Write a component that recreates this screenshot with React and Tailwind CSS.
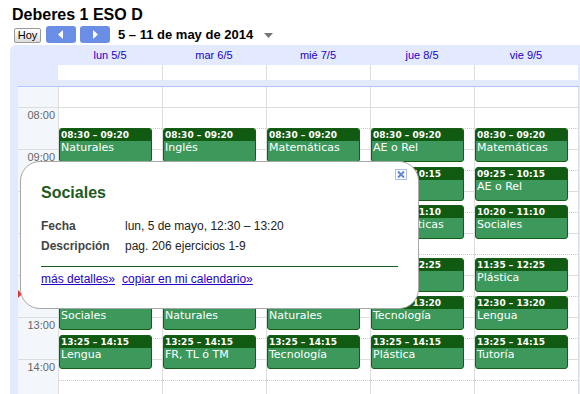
import React from 'react';

const starts = ['08:30', '09:25', '10:20', '11:35', '12:30', '13:25'];
const ends = ['09:20', '10:15', '11:10', '12:25', '13:20', '14:15'];

const days = [
  { label: 'lun 5/5', subjects: ['Naturales', 'Matemáticas', 'Lengua', 'Inglés', 'Sociales', 'Lengua'] },
  { label: 'mar 6/5', subjects: ['Inglés', 'Lengua', 'Matemáticas', 'Sociales', 'Naturales', 'FR, TL ó TM'] },
  { label: 'mié 7/5', subjects: ['Matemáticas', 'Inglés', 'Sociales', 'Lengua', 'Naturales', 'Tecnología'] },
  { label: 'jue 8/5', subjects: ['AE o Rel', 'Sociales', 'Matemáticas', 'Lengua', 'Tecnología', 'Plástica'] },
  { label: 'vie 9/5', subjects: ['Matemáticas', 'AE o Rel', 'Sociales', 'Plástica', 'Lengua', 'Tutoría'] },
];

const hours = ['08:00', '09:00', '10:00', '11:00', '12:00', '13:00', '14:00', ''];

function minutesFrom8(t) {
  const [h, m] = t.split(':').map(Number);
  return (h - 8) * 60 + m;
}

function Event({ start, end, title }) {
  const top = Math.floor(20.6 + 0.7 * minutesFrom8(start));
  return (
    <div
      className="absolute left-0 w-[93px] h-[34px] rounded-[3px] border border-[#175c17] bg-[#3c985b] overflow-hidden"
      style={{ top }}
    >
      <div className="h-[12px] bg-[#115a11] pl-[1px] text-[9px] leading-[12px] font-bold text-white font-['DejaVu_Sans',sans-serif] whitespace-nowrap">
        {start} – {end}
      </div>
      <div className="pl-[1px] text-[11px] leading-[14px] text-white font-['DejaVu_Sans',sans-serif] whitespace-nowrap">
        {title}
      </div>
    </div>
  );
}

function Slots() {
  return (
    <>
      <div className="h-[20px]" />
      {hours.map((h, i) => (
        <React.Fragment key={i}>
          <div className="h-[21px] border-t border-[#dddddd]" />
          <div className="h-[21px] border-t border-dotted border-[#cccccc]" />
        </React.Fragment>
      ))}
    </>
  );
}

export default function App() {
  return (
    <div className="relative w-[580px] h-[394px] overflow-hidden bg-white font-['Liberation_Sans',Arial,sans-serif] text-black">
      {/* Title */}
      <div className="h-[26px] pt-[5px] pl-[12px] text-[16px] leading-[20px] font-bold">
        Deberes 1 ESO D
      </div>

      {/* Toolbar */}
      <div className="flex items-start h-[19px]">
        <button className="ml-[14px] mt-[2px] w-[27px] h-[15px] border border-[#999] rounded-[2px] bg-gradient-to-b from-white to-[#dddddd] text-[11px] leading-[13px] text-black">
          Hoy
        </button>
        <div className="ml-[5px] w-[30px] h-[17px] rounded-[3px] bg-[#6a8ee6] flex items-center justify-center">
          <svg width="6" height="9" viewBox="0 0 6 9">
            <path d="M5 0 L0 4.5 L5 9 Z" fill="white" />
          </svg>
        </div>
        <div className="ml-[4px] w-[30px] h-[17px] rounded-[3px] bg-[#6a8ee6] flex items-center justify-center">
          <svg width="6" height="9" viewBox="0 0 6 9">
            <path d="M1 0 L6 4.5 L1 9 Z" fill="white" />
          </svg>
        </div>
        <div className="ml-[8px] text-[13px] leading-[17px] font-bold whitespace-nowrap">
          5 – 11 de may de 2014
        </div>
        <svg className="ml-[11px] mt-[7px]" width="9" height="5" viewBox="0 0 9 5">
          <path d="M0 0 L9 0 L4.5 5 Z" fill="#777" />
        </svg>
      </div>

      {/* Calendar */}
      <div className="ml-[10px] w-[570px] bg-[#e3e9ff] rounded-tl-[6px] pl-[8px]">
        {/* Day headers */}
        <div className="flex h-[20px]">
          <div className="w-[40px]" />
          {days.map((d) => (
            <div key={d.label} className="w-[104px] text-center text-[11px] leading-[20px] text-[#2200cc]">
              {d.label}
            </div>
          ))}
        </div>

        {/* All day row */}
        <div className="flex h-[15px]">
          <div className="w-[40px]" />
          {days.map((d, i) => (
            <div
              key={d.label}
              className={i === 0 ? 'w-[104px] bg-white' : 'w-[104px] bg-white border-l border-[#dddddd]'}
            />
          ))}
        </div>
        <div className="h-[6px]" />

        {/* Grid */}
        <div className="flex w-[561px] h-[320px] border-t border-[#b3c6ff]">
          <div className="w-[40px] bg-[#f3f6fb]">
            <div className="h-[20px]" />
            {hours.map((h, i) => (
              <div
                key={i}
                className="h-[42px] border-t border-[#dddddd] pr-[3px] pt-[1px] text-right text-[11px] leading-[13px] text-[#666]"
              >
                {h}
              </div>
            ))}
          </div>
          {days.map((d, i) => (
            <div
              key={d.label}
              className={
                i === 4
                  ? 'relative w-[105px] bg-white border-l border-r border-[#dddddd]'
                  : 'relative w-[104px] bg-white border-l border-[#dddddd]'
              }
            >
              <Slots />
              {d.subjects.map((s, k) => (
                <Event key={k} start={starts[k]} end={ends[k]} title={s} />
              ))}
            </div>
          ))}
        </div>
      </div>

      {/* Current time marker */}
      <svg className="absolute left-[18px] top-[290px]" width="4" height="8" viewBox="0 0 4 8">
        <path d="M0 0 L4 4 L0 8 Z" fill="#dd3333" />
      </svg>

      {/* Event popup */}
      <div className="absolute left-[20px] top-[161px] w-[399px] h-[148px] rounded-[20px] border border-[#a8a8a8] bg-white pt-[21px] px-[20px]">
        <div className="text-[16px] leading-[20px] font-bold text-[#1d5a1d]">Sociales</div>
        <div className="mt-[13px] flex text-[12px] leading-[20px] text-[#222]">
          <div className="w-[84px] font-bold text-[#444]">Fecha</div>
          <div>lun, 5 de mayo, 12:30 – 13:20</div>
        </div>
        <div className="flex text-[12px] leading-[20px] text-[#222]">
          <div className="w-[84px] font-bold text-[#444]">Descripción</div>
          <div>pag. 206 ejercicios 1-9</div>
        </div>
        <div className="mt-[10px] h-px bg-[#1d5a1d]" />
        <div className="mt-[4px] flex gap-[7px] text-[12px] leading-[16px]">
          <a className="text-[#2200cc] underline" href="#">más detalles»</a>
          <a className="text-[#2200cc] underline" href="#">copiar en mi calendario»</a>
        </div>
        <svg className="absolute right-[11px] top-[7px]" width="12" height="11" viewBox="0 0 12 11">
          <rect x="0.5" y="0.5" width="11" height="10" fill="white" stroke="#a9bcef" />
          <path d="M3 2.5 L9 8.5 M9 2.5 L3 8.5" stroke="#5f83dd" strokeWidth="1.8" />
        </svg>
      </div>
    </div>
  );
}
